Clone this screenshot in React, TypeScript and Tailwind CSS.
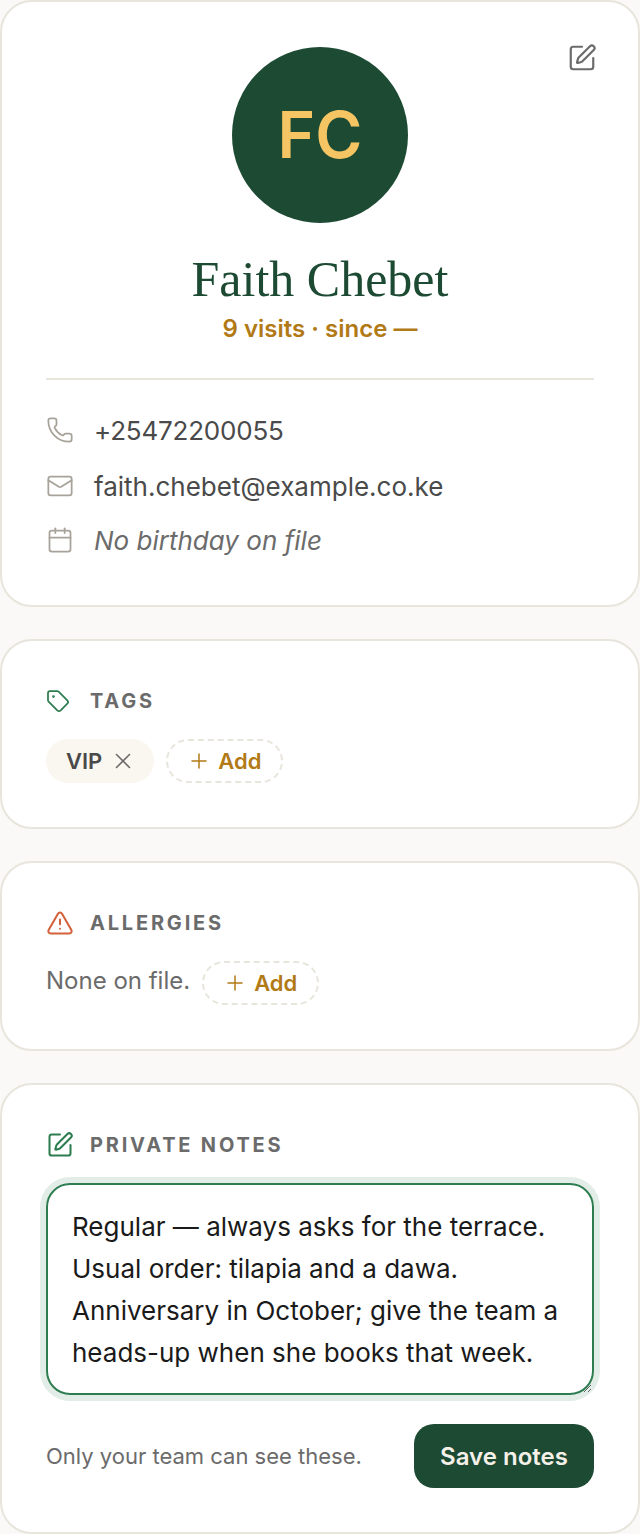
import { Calendar, Mail, Phone, Plus, SquarePen, Tag, TriangleAlert, X } from "lucide-react";

const card = "rounded-[32px] border-2 border-[#e8e5dc] bg-white";

function AddButton({ border }: { border: string }) {
  return (
    <button className={`flex h-[44px] items-center gap-[7px] rounded-full border-2 border-dashed ${border} pl-[19px] pr-[20px] text-[22px] font-semibold text-[#b27a16]`}>
      <Plus size={24} strokeWidth={1.5} />
      Add
    </button>
  );
}

function SectionTitle({ icon, title }: { icon: React.ReactNode; title: string }) {
  return (
    <div className="flex items-center gap-[16px]">
      <span className="flex w-[28px] items-center">{icon}</span>
      <h3 className="text-[20px] leading-[28px] font-bold tracking-[2.8px] text-[#6b6b6b]">{title}</h3>
    </div>
  );
}

export default function App() {
  return (
    <div className="flex w-[640px] flex-col gap-[32px] bg-[#faf9f7] font-['Inter',sans-serif]">
      {/* Profile */}
      <div className={`${card} relative h-[607px] px-[44px] pt-[45px]`}>
        <button className="absolute top-[41px] right-[41px] text-[#6b6b6b]">
          <SquarePen size={30} strokeWidth={1.75} />
        </button>
        <div className="flex flex-col items-center">
          <div className="flex h-[176px] w-[176px] items-center justify-center rounded-full bg-[#1c4a33] text-[64px] font-semibold text-[#f5c563]">
            FC
          </div>
          <h1 className="mt-[28px] font-['Liberation_Serif',serif] text-[50px] leading-[56px] text-[#1c4a33]">Faith Chebet</h1>
          <p className="mt-[6px] text-[24px] leading-[32px] font-semibold text-[#b27a16]">9 visits · since —</p>
        </div>
        <div className="mt-[33px] border-t-2 border-[#e8e5dc]" />
        <div className="mt-[32px] flex flex-col text-[26px] text-[#4a4a4a]">
          <div className="flex h-[36px] items-center gap-[20px]">
            <Phone size={28} strokeWidth={1.5} className="text-[#a8a39a]" />
            <span className="tracking-[-0.2px]">+25472200055</span>
          </div>
          <div className="mt-[20px] flex h-[36px] items-center gap-[20px]">
            <Mail size={28} strokeWidth={1.5} className="text-[#a8a39a]" />
            faith.chebet@example.co.ke
          </div>
          <div className="mt-[18px] flex h-[36px] items-center gap-[20px] text-[#6b6b6b] italic">
            <Calendar size={28} strokeWidth={1.5} className="text-[#a8a39a]" />
            No birthday on file
          </div>
        </div>
      </div>

      {/* Tags */}
      <div className={`${card} h-[190px] px-[44px] pt-[46px]`}>
        <SectionTitle icon={<Tag size={24} strokeWidth={1.75} className="text-[#2e7d50]" />} title="TAGS" />
        <div className="mt-[24px] flex items-center gap-[12px]">
          <span className="flex h-[44px] items-center gap-[8px] rounded-full bg-[#faf7f0] pr-[18px] pl-[20px] text-[22px] font-semibold text-[#4a4a4a]">
            VIP
            <X size={26} strokeWidth={1.5} className="text-[#6b6b6b]" />
          </span>
          <AddButton border="border-[#e8e5dc]" />
        </div>
      </div>

      {/* Allergies */}
      <div className={`${card} h-[190px] px-[44px] pt-[46px]`}>
        <SectionTitle icon={<TriangleAlert size={28} strokeWidth={1.75} className="text-[#d4613a]" />} title="ALLERGIES" />
        <div className="mt-[24px] flex items-center gap-[12px] text-[24px] text-[#6b6b6b]">
          <span className="mb-[4px]">None on file.</span>
          <AddButton border="border-[#e8e5dc]" />
        </div>
      </div>

      {/* Notes */}
      <div className={`${card} h-[451px] px-[44px] pt-[46px]`}>
        <SectionTitle icon={<SquarePen size={28} strokeWidth={1.75} className="text-[#2e7d50]" />} title="PRIVATE NOTES" />
        <textarea
          readOnly
          className="mt-[24px] block h-[212px] w-full rounded-[24px] border-2 border-[#2e7d50] px-[24px] py-[21px] text-[26px] leading-[42px] text-[#1a1a1a] shadow-[0_0_0_6px_#e3ede8] outline-none"
          value={"Regular — always asks for the terrace. Usual order: tilapia and a dawa. Anniversary in October; give the team a heads-up when she books that week."}
        />
        <div className="mt-[29px] flex items-center justify-between">
          <span className="text-[22px] text-[#6b6b6b]">Only your team can see these.</span>
          <button className="h-[64px] w-[180px] rounded-[20px] bg-[#1c4a33] pt-[2px] text-[24px] font-semibold text-[#f5f0e8]">Save notes</button>
        </div>
      </div>
    </div>
  );
}
